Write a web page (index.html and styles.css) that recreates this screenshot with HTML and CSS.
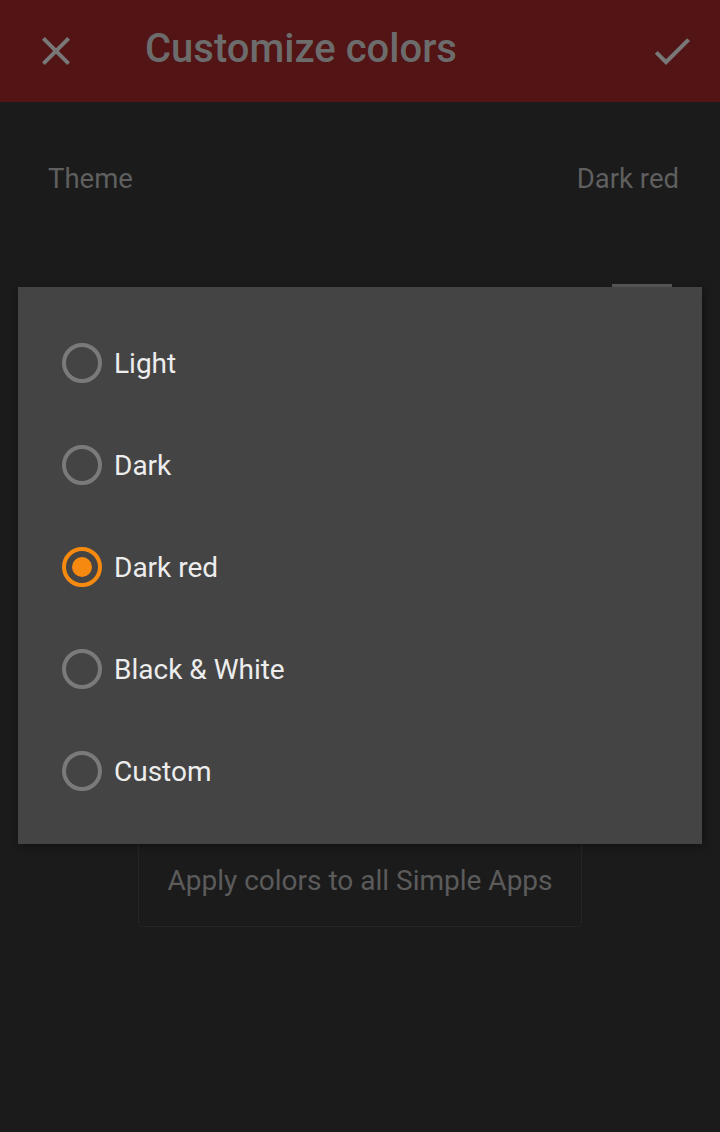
FILE: index.html
```html
<!DOCTYPE html>
<html lang="en">
<head>
    <meta charset="UTF-8">
    <meta name="viewport" content="width=device-width, initial-scale=1.0">
    <title>Customize colors</title>
    <link rel="stylesheet" href="styles.css">
</head>
<body>
    <div class="screen">
        <header class="toolbar">
            <button class="icon-btn" aria-label="Close">
                <svg viewBox="0 0 24 24" width="48" height="48"><path d="M19 6.41L17.59 5 12 10.59 6.41 5 5 6.41 10.59 12 5 17.59 6.41 19 12 13.41 17.59 19 19 17.59 13.41 12z"/></svg>
            </button>
            <h1>Customize colors</h1>
            <button class="icon-btn save" aria-label="Save">
                <svg viewBox="0 0 24 24" width="48" height="48"><path d="M9 16.17L4.83 12l-1.42 1.41L9 19 21 7l-1.41-1.41z"/></svg>
            </button>
        </header>

        <main class="settings">
            <div class="setting-row theme-row">
                <span>Theme</span>
                <span>Dark red</span>
            </div>
            <!-- color rows sit under the dialog, only their swatches matter -->
            <div class="setting-row color-row" aria-label="Text color"><span class="swatch"></span></div>
            <div class="setting-row color-row" aria-label="Background color"><span class="swatch"></span></div>
            <div class="setting-row color-row" aria-label="Primary color"><span class="swatch"></span></div>
            <div class="setting-row color-row" aria-label="App icon color"><span class="swatch"></span></div>
            <div class="apply-wrap">
                <button class="apply-btn">Apply colors to all Simple Apps</button>
            </div>
        </main>

        <div class="dialog">
            <label class="radio-item"><span class="radio"></span>Light</label>
            <label class="radio-item"><span class="radio"></span>Dark</label>
            <label class="radio-item"><span class="radio checked"></span>Dark red</label>
            <label class="radio-item"><span class="radio"></span>Black &amp; White</label>
            <label class="radio-item"><span class="radio"></span>Custom</label>
        </div>
    </div>
</body>
</html>
```

FILE: styles.css
```css
:root {
    --bar-color: #521414;
    --bg-color: #1b1b1b;
    --dialog-bg: #444444;
    --dim-text: #5f5f5f;
    --accent: #f68a10;
}

* {
    margin: 0;
    padding: 0;
    box-sizing: border-box;
}

body {
    font-family: Roboto, "Noto Sans", sans-serif;
    background-color: var(--bg-color);
    width: 720px;
    height: 1132px;
    overflow: hidden;
}

.screen {
    position: relative;
    height: 100%;
}

.toolbar {
    height: 102px;
    background-color: var(--bar-color);
    display: flex;
    align-items: center;
    padding: 0 24px 0 32px;
}

.icon-btn {
    width: 48px;
    height: 48px;
    border: none;
    background: none;
    display: flex;
}

.icon-btn svg {
    fill: #787878;
}

.toolbar h1 {
    flex: 1;
    margin: 0 0 4px 65px;
    font-size: 40px;
    font-weight: 500;
    color: #6c6c6c;
    line-height: 44px;
}

.settings {
    padding: 0 41px 0 48px;
}

.setting-row {
    display: flex;
    justify-content: space-between;
    align-items: center;
    font-size: 27.5px;
    color: var(--dim-text);
}

.theme-row {
    height: 154px;
    padding-bottom: 2px;
}

.color-row {
    height: 116px;
    align-items: flex-start;
    justify-content: flex-end;
    padding-top: 28px;
}

.swatch {
    width: 60px;
    height: 60px;
    margin-right: 7px;
    background-color: #5a5a5a;
}

.apply-wrap {
    display: flex;
    justify-content: center;
    margin-top: 115px;
    margin-left: -7px;
}

.apply-btn {
    height: 92px;
    padding: 0 28px 2px;
    border: 1px solid #252525;
    border-radius: 4px;
    background: none;
    font-family: inherit;
    font-size: 28px;
    color: #5b5b5b;
}

.dialog {
    position: absolute;
    left: 18px;
    top: 287px;
    width: 684px;
    padding: 25px 0 22px;
    background-color: var(--dialog-bg);
    box-shadow: 2px 2px 8px rgba(0, 0, 0, 0.35);
}

.radio-item {
    height: 102px;
    display: flex;
    align-items: center;
    padding-left: 44px;
    font-size: 28px;
    color: #ededed;
}

.radio {
    width: 40px;
    height: 40px;
    margin-right: 12px;
    border: 4px solid #7a7a7a;
    border-radius: 50%;
    display: flex;
    align-items: center;
    justify-content: center;
}

.radio.checked {
    border-color: var(--accent);
}

.radio.checked::after {
    content: "";
    width: 20px;
    height: 20px;
    border-radius: 50%;
    background-color: var(--accent);
}
```
